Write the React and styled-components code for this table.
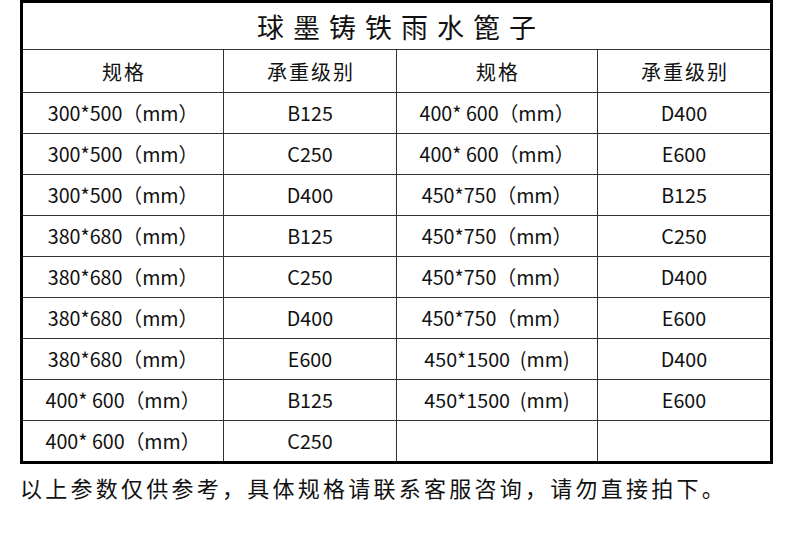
import React from 'react';
import styled, { createGlobalStyle } from 'styled-components';

const GlobalStyle = createGlobalStyle`
  html, body {
    margin: 0;
    padding: 0;
    background: #fff;
  }
  body {
    font-family: "Noto Sans CJK SC", "Noto Sans", sans-serif;
    color: #111;
  }
`;

const Page = styled.div`
  width: 790px;
  height: 539px;
  padding-left: 20px;
  box-sizing: border-box;
`;

const Table = styled.table`
  width: 750px;
  border-collapse: collapse;
  border: 3px solid #000;
  table-layout: fixed;
`;

const TitleCell = styled.th`
  height: 46px;
  padding: 0 0 0 9px;
  font-size: 27px;
  font-weight: 400;
  letter-spacing: 9px;
  text-align: center;
  border-bottom: 1px solid #333;
  line-height: 1;
`;

const HeadCell = styled.th`
  height: 40px;
  padding: 2px 0 0 2px;
  font-size: 20px;
  font-weight: 400;
  letter-spacing: 2px;
  text-align: center;
  border: 1px solid #333;
  line-height: 1;
`;

const Cell = styled.td`
  height: 40px;
  padding: 0;
  font-size: 19.7px;
  text-align: center;
  border: 1px solid #333;
  line-height: 1;
  white-space: nowrap;
`;

const Note = styled.p`
  margin: 8px 0 0;
  font-size: 22px;
  line-height: 30px;
  letter-spacing: 3.25px;
  color: #111;
`;

const rows = [
  ['300*500（mm）', 'B125', '400* 600（mm）', 'D400'],
  ['300*500（mm）', 'C250', '400* 600（mm）', 'E600'],
  ['300*500（mm）', 'D400', '450*750（mm）', 'B125'],
  ['380*680（mm）', 'B125', '450*750（mm）', 'C250'],
  ['380*680（mm）', 'C250', '450*750（mm）', 'D400'],
  ['380*680（mm）', 'D400', '450*750（mm）', 'E600'],
  ['380*680（mm）', 'E600', '450*1500\u2002(mm)', 'D400'],
  ['400* 600（mm）', 'B125', '450*1500\u2002(mm)', 'E600'],
  ['400* 600（mm）', 'C250', '', ''],
];

export default function App() {
  return (
    <Page>
      <GlobalStyle />
      <Table>
        <colgroup>
          <col style={{ width: 202 }} />
          <col style={{ width: 173 }} />
          <col style={{ width: 201 }} />
          <col style={{ width: 174 }} />
        </colgroup>
        <thead>
          <tr>
            <TitleCell colSpan={4}>球墨铸铁雨水篦子</TitleCell>
          </tr>
          <tr>
            <HeadCell>规格</HeadCell>
            <HeadCell>承重级别</HeadCell>
            <HeadCell>规格</HeadCell>
            <HeadCell>承重级别</HeadCell>
          </tr>
        </thead>
        <tbody>
          {rows.map((r, i) => (
            <tr key={i}>
              {r.map((c, j) => (
                <Cell key={j}>{c}</Cell>
              ))}
            </tr>
          ))}
        </tbody>
      </Table>
      <Note>以上参数仅供参考，具体规格请联系客服咨询，请勿直接拍下。</Note>
    </Page>
  );
}
